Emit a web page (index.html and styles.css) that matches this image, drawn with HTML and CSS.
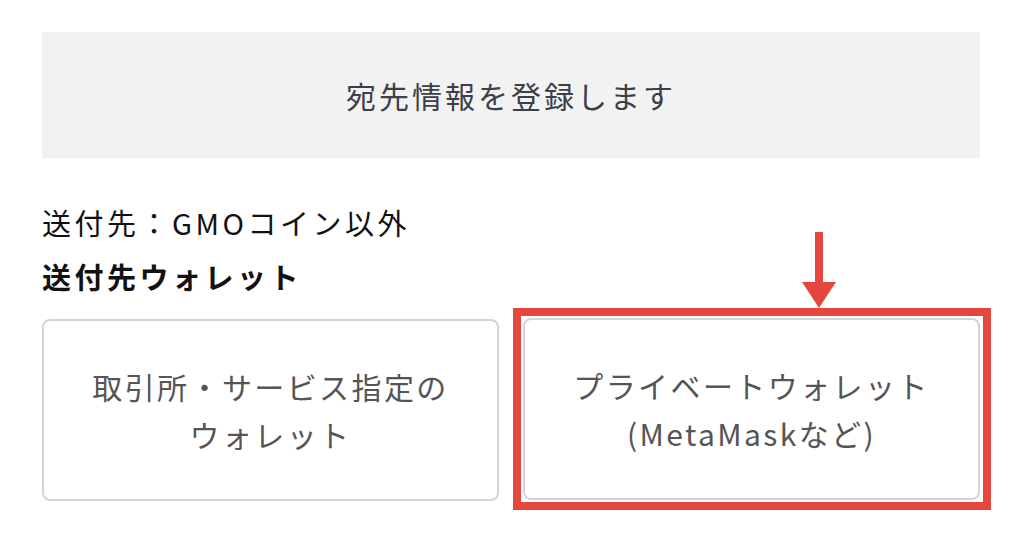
FILE: index.html
```html
<!DOCTYPE html>
<html lang="ja">
<head>
  <meta charset="UTF-8">
  <meta name="viewport" content="width=device-width, initial-scale=1.0">
  <title>宛先情報の登録</title>
  <link rel="stylesheet" href="styles.css">
</head>
<body>
  <div class="page">
    <div class="banner">宛先情報を登録します</div>

    <p class="dest">送付先：GMOコイン以外</p>
    <h2 class="label">送付先ウォレット</h2>

    <div class="choices">
      <button class="choice">取引所・サービス指定の<br>ウォレット</button>
      <div class="highlight">
        <!-- annotation arrow -->
        <svg class="arrow" width="34" height="76" viewBox="0 0 34 76">
          <rect x="13" y="0" width="8" height="54" fill="#e5463e"/>
          <polygon points="0,50 34,50 17,76" fill="#e5463e"/>
        </svg>
        <button class="choice">プライベートウォレット<br>(MetaMaskなど)</button>
      </div>
    </div>
  </div>
</body>
</html>
```

FILE: styles.css
```css
body {
  margin: 0;
  background: #fff;
  font-family: "Noto Sans CJK JP", "Noto Sans", sans-serif;
}

.page {
  padding: 32px 44px 0 42px;
}

.banner {
  height: 126px;
  background-color: #f2f2f2;
  display: flex;
  justify-content: center;
  align-items: center;
  color: #3b4048;
  font-size: 30px;
  letter-spacing: 3px;
}

.dest {
  margin: 44px 0 0;
  font-size: 29px;
  line-height: 40px;
  letter-spacing: 3.5px;
  color: #111;
}

.label {
  margin: 14px 0 0;
  font-size: 29px;
  line-height: 40px;
  letter-spacing: 3.5px;
  font-weight: bold;
  color: #111;
}

.choices {
  margin-top: 23px;
  display: flex;
  align-items: flex-start;
  gap: 14px;
}

.choice {
  display: block;
  flex-shrink: 0;
  width: 457px;
  height: 182px;
  background: #fff;
  border: 2px solid #d4d4d4;
  border-radius: 8px;
  font-family: inherit;
  font-size: 30px;
  line-height: 48px;
  letter-spacing: 2.4px;
  color: #555;
  padding: 0;
}

.highlight {
  position: relative;
  flex-shrink: 0;
  width: 460px;
  margin-top: -11px;
  border: 8px solid #e5463e;
  padding: 2px 0 2px 2px;
}

.arrow {
  position: absolute;
  left: 281px;
  top: -84px;
}
```
